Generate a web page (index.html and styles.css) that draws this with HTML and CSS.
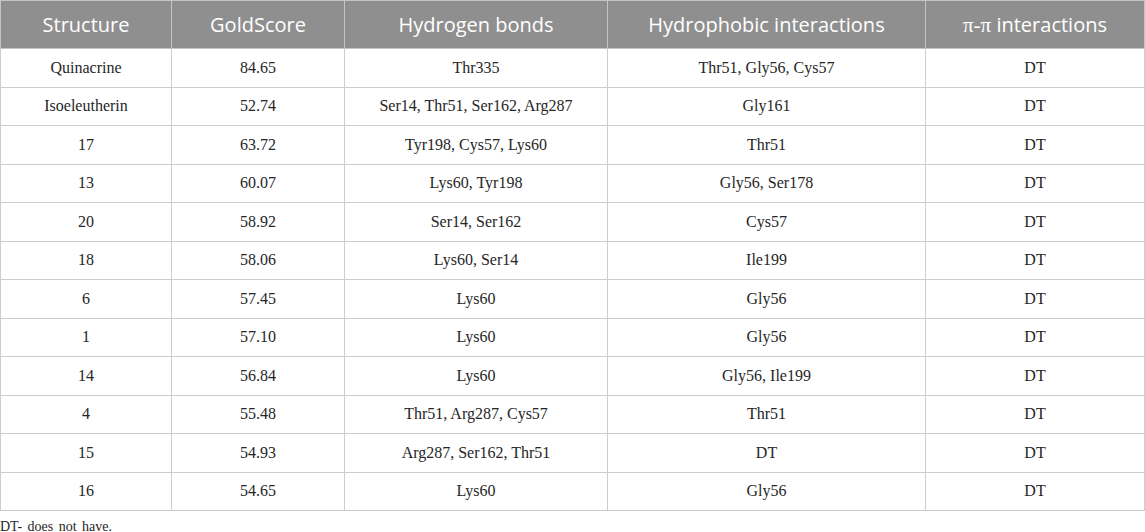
FILE: index.html
```html
<!DOCTYPE html>
<html>
<head>
<meta charset="utf-8">
<link rel="stylesheet" href="styles.css">
</head>
<body>
<table class="data">
  <colgroup>
    <col class="c1"><col class="c2"><col class="c3"><col class="c4"><col class="c5">
  </colgroup>
  <thead>
    <tr><th>Structure</th><th>GoldScore</th><th>Hydrogen bonds</th><th>Hydrophobic interactions</th><th><span class="pi">π-π</span> interactions</th></tr>
  </thead>
  <tbody>
    <tr><td>Quinacrine</td><td>84.65</td><td>Thr335</td><td>Thr51, Gly56, Cys57</td><td>DT</td></tr>
    <tr><td>Isoeleutherin</td><td>52.74</td><td>Ser14, Thr51, Ser162, Arg287</td><td>Gly161</td><td>DT</td></tr>
    <tr><td>17</td><td>63.72</td><td>Tyr198, Cys57, Lys60</td><td>Thr51</td><td>DT</td></tr>
    <tr><td>13</td><td>60.07</td><td>Lys60, Tyr198</td><td>Gly56, Ser178</td><td>DT</td></tr>
    <tr><td>20</td><td>58.92</td><td>Ser14, Ser162</td><td>Cys57</td><td>DT</td></tr>
    <tr><td>18</td><td>58.06</td><td>Lys60, Ser14</td><td>Ile199</td><td>DT</td></tr>
    <tr><td>6</td><td>57.45</td><td>Lys60</td><td>Gly56</td><td>DT</td></tr>
    <tr><td>1</td><td>57.10</td><td>Lys60</td><td>Gly56</td><td>DT</td></tr>
    <tr><td>14</td><td>56.84</td><td>Lys60</td><td>Gly56, Ile199</td><td>DT</td></tr>
    <tr><td>4</td><td>55.48</td><td>Thr51, Arg287, Cys57</td><td>Thr51</td><td>DT</td></tr>
    <tr><td>15</td><td>54.93</td><td>Arg287, Ser162, Thr51</td><td>DT</td><td>DT</td></tr>
    <tr><td>16</td><td>54.65</td><td>Lys60</td><td>Gly56</td><td>DT</td></tr>
  </tbody>
</table>
<p class="note">DT- does not have.</p>
</body>
</html>
```
FILE: styles.css
```css
html, body {
  margin: 0;
  padding: 0;
  background: #ffffff;
}

.data {
  border-collapse: collapse;
  table-layout: fixed;
  width: 1144px;
  font-family: "Liberation Serif", "Times New Roman", serif;
  font-size: 16px;
  color: #262626;
}

.c1 { width: 171px; }
.c2 { width: 173px; }
.c3 { width: 263px; }
.c4 { width: 318px; }
.c5 { width: 219px; }

.data th {
  background: #8f8f8f;
  color: #ffffff;
  font-family: "Open Sans", "Noto Sans", sans-serif;
  font-weight: 400;
  font-size: 20px;
  height: 47px;
  padding: 0;
  border: 1px solid #c4c4c4;
  text-align: center;
  vertical-align: middle;
}

.pi {
  font-family: "Liberation Serif", serif;
  font-size: 21px;
}

.data td {
  height: 37.5px;
  padding: 0;
  border: 1px solid #cdcdcd;
  text-align: center;
  vertical-align: middle;
}

.note {
  margin: 8px 0 0 0;
  font-family: "Liberation Serif", "Times New Roman", serif;
  font-size: 14px;
  color: #262626;
  word-spacing: 2px;
}
```
